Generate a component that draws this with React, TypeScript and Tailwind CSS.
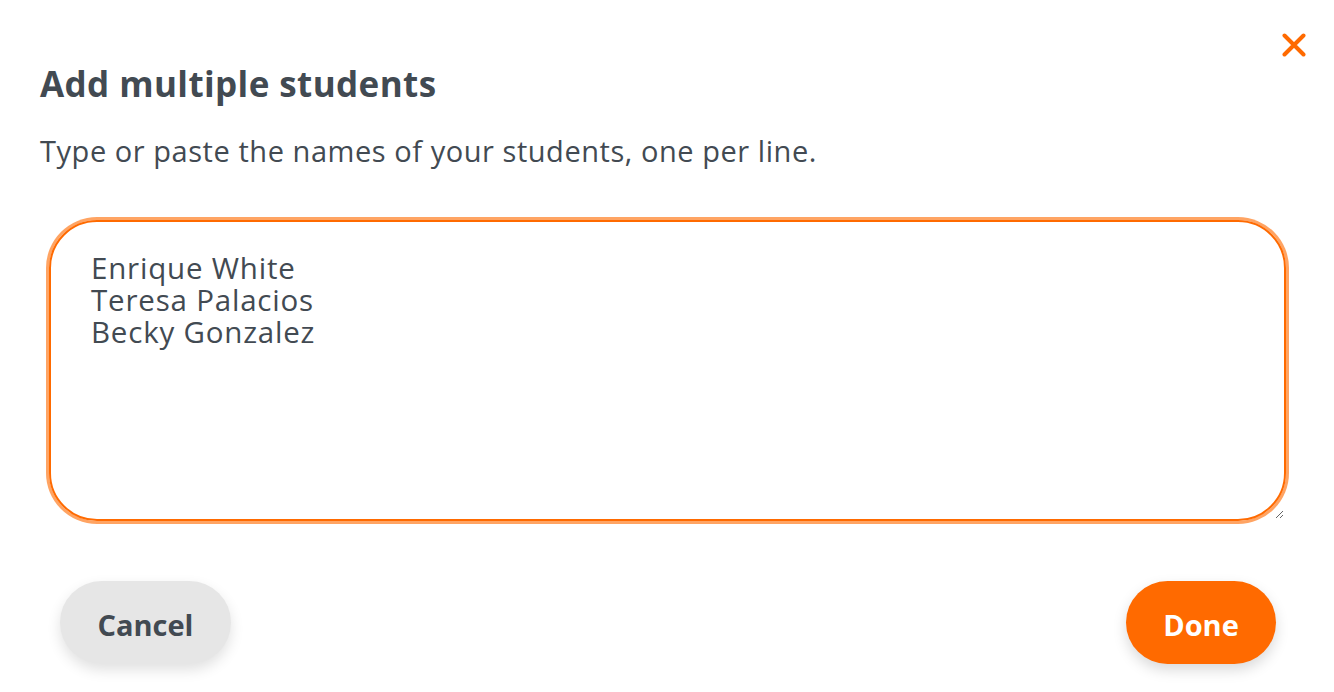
import React from "react";

export default function App() {
  return (
    <div
      className="w-[1334px] h-[692px] bg-white relative overflow-hidden text-[#424a52]"
      style={{ fontFamily: "'Open Sans', 'Noto Sans', sans-serif" }}
    >
      <button className="absolute right-[28px] top-[33px] w-[24px] h-[24px] flex items-center justify-center">
        <svg width="24" height="24" viewBox="0 0 24 24">
          <path d="M2.5 2.5 L21.5 21.5 M21.5 2.5 L2.5 21.5" stroke="#ff6a00" strokeWidth="4" strokeLinecap="round" />
        </svg>
      </button>
      <div className="px-[40px] pt-[64px]">
        <h1 className="text-[35px] font-bold leading-[40px] tracking-[0.4px]">Add multiple students</h1>
        <p className="mt-[31px] text-[29px] leading-[32px] tracking-[0.55px]">Type or paste the names of your students, one per line.</p>
        <div className="mt-[53px] pl-[9px] pr-[8px]">
          <textarea
            className="block w-full h-[301px] rounded-[48px] border-[2px] border-[#ff6a00] outline-none ring-[3px] ring-[#ffa463] px-[40px] pt-[30px] text-[29.5px] leading-[32px] font-medium tracking-[0.8px] text-[#424a52] resize-y"
            defaultValue={"Enrique White\nTeresa Palacios\nBecky Gonzalez"}
          />
        </div>
        <div className="mt-[60px] flex justify-between pl-[20px] pr-[18px]">
          <button className="h-[83px] w-[171px] pt-[4px] rounded-full bg-[#e6e6e6] text-[29px] font-bold text-[#424a52] shadow-[0_6px_14px_rgba(0,0,0,0.12)]">
            Cancel
          </button>
          <button className="h-[83px] w-[150px] pt-[4px] rounded-full bg-[#ff6a00] text-[29px] font-bold text-white shadow-[0_6px_14px_rgba(0,0,0,0.15)]">
            Done
          </button>
        </div>
      </div>
    </div>
  );
}
